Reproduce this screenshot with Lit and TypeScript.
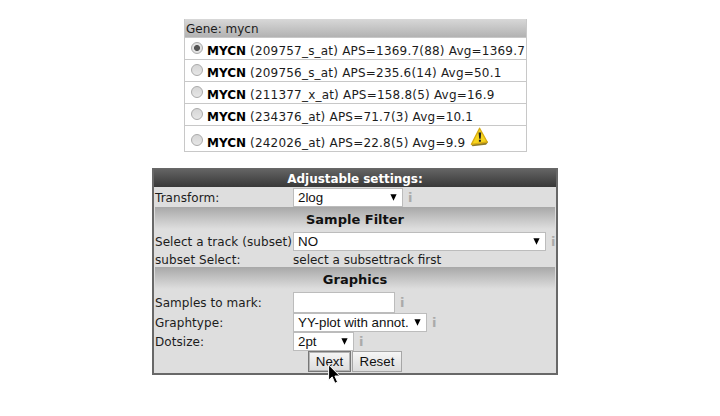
import { LitElement, html, css } from "lit";
import { customElement, property } from "lit/decorators.js";

const probes = [
  { id: "(209757_s_at)", stats: "APS=1369.7(88) Avg=1369.7", on: true },
  { id: "(209756_s_at)", stats: "APS=235.6(14) Avg=50.1" },
  { id: "(211377_x_at)", stats: "APS=158.8(5) Avg=16.9" },
  { id: "(234376_at)", stats: "APS=71.7(3) Avg=10.1" },
  { id: "(242026_at)", stats: "APS=22.8(5) Avg=9.9", warn: true },
];

@customElement("drop-down")
class DropDown extends LitElement {
  @property() value = "";
  static styles = css`
    :host {
      display: flex;
      align-items: center;
      justify-content: space-between;
      box-sizing: border-box;
      height: 19px;
      border: 1px solid #bcbcbc;
      background: #fff;
      padding: 0 5px 0 4px;
      font: 13.33px/17px "Liberation Sans", sans-serif;
      color: #111;
    }
    svg {
      display: block;
    }
  `;
  render() {
    return html`<span>${this.value}</span
      ><svg width="7" height="7" viewBox="0 0 7 7"><path d="M0.4 0.3h6.2L3.5 6.8z" fill="#000" /></svg>`;
  }
}

@customElement("app-root")
class AppRoot extends LitElement {
  static styles = css`
    :host {
      display: block;
      position: relative;
      box-sizing: border-box;
      width: 720px;
      height: 416px;
      padding-top: 19px;
      background: #fff;
      overflow: hidden;
      font: 12px/18px "DejaVu Sans", Verdana, sans-serif;
      color: #1c1c1c;
      white-space: nowrap;
    }
    .genes {
      box-sizing: border-box;
      width: 343px;
      height: 133px;
      margin-left: 184px;
      border: 1px solid #c8c8c8;
      border-top: 0;
    }
    .title {
      height: 18px;
      padding-left: 1px;
      line-height: 20px;
      background: linear-gradient(#d8d8d8, #b2b2b2);
      border-bottom: 1px solid #c8c8c8;
    }
    .probe {
      display: flex;
      height: 21px;
      padding-left: 6px;
      border-bottom: 1px solid #c8c8c8;
      line-height: 26px;
    }
    .probe:last-child {
      height: 25px;
      border: 0;
      line-height: 34px;
    }
    .probe b {
      color: #000;
      margin: 0 4px 0 4px;
    }
    .stats {
      letter-spacing: 0.2px;
    }
    .radio {
      box-sizing: border-box;
      width: 12px;
      height: 12px;
      margin-top: 4px;
      border: 1px solid #aaa;
      border-radius: 50%;
      background: linear-gradient(#d6d6d6, #e6e6e6);
    }
    .probe:last-child .radio {
      margin-top: 8px;
    }
    .radio.on {
      background: radial-gradient(circle, #555 0 2.6px, #e2e2e2 3.4px);
    }
    .warn {
      margin: 1px 0 0 5px;
    }
    .panel {
      box-sizing: border-box;
      width: 406px;
      height: 207px;
      margin: 16px 0 0 152px;
      border: 2px solid #686868;
      border-top-width: 1px;
      background: #dedede;
    }
    .head {
      height: 18px;
      margin-bottom: 1px;
      line-height: 21px;
      text-align: center;
      font-weight: bold;
      letter-spacing: -0.06px;
      color: #fff;
      background: linear-gradient(#646464, #383838);
    }
    .row {
      display: grid;
      grid-template-columns: 138px auto auto;
      justify-content: start;
      align-items: center;
      height: 19px;
      padding-left: 1px;
    }
    .label {
      letter-spacing: 0.06px;
    }
    .subset {
      height: 16px;
    }
    .marks {
      height: 21px;
    }
    .band {
      height: 25px;
      margin: 0 1px;
      background: linear-gradient(#a8a8a8, #dedede 22px);
      text-align: center;
      font-weight: bold;
      font-size: 13px;
      line-height: 25px;
      color: #111;
    }
    .info {
      margin-left: 5px;
      font: bold 13px/17px "DejaVu Sans", sans-serif;
      color: #aaa;
    }
    .field {
      box-sizing: border-box;
      width: 102px;
      height: 21px;
      background: #fff;
      border: 1px solid #bcbcbc;
    }
    .actions {
      display: flex;
      gap: 1px;
      padding-left: 154px;
    }
    .btn {
      box-sizing: border-box;
      height: 21px;
      border: 1px solid #a6a6a6;
      background: linear-gradient(#f6f6f6, #dcdcdc);
      font: 13.33px/19px "Liberation Sans", sans-serif;
      color: #111;
      text-align: center;
    }
    .next {
      width: 43px;
      border-color: #777;
      box-shadow: inset 0 0 0 1px #b4b4b4;
    }
    .reset {
      width: 50px;
    }
    .cursor {
      position: absolute;
      left: 328px;
      top: 364px;
    }
  `;

  private row(label: string, value: string, width: number) {
    return html`<div class="row">
      <span class="label">${label}</span><drop-down .value=${value} style="width:${width}px"></drop-down
      ><span class="info">i</span>
    </div>`;
  }

  render() {
    return html`
      <div class="genes">
        <div class="title">Gene: mycn</div>
        ${probes.map(
          (p) => html`<div class="probe">
            <span class="radio ${p.on ? "on" : ""}"></span><b>MYCN</b><span class="stats">${p.id} ${p.stats}</span>
            ${p.warn
              ? html`<svg class="warn" width="19" height="20" viewBox="0 0 19 20">
                  <path d="M1 17.2 2.5 19.2 16 17.8 18 15.2 17 14z" fill="#8f7b2a" />
                  <path d="M9.6 1.2 17.2 15 1.4 17.4z" fill="#f7d51d" stroke="#d8ac12" stroke-width="1.3" stroke-linejoin="round" />
                  <path d="M8.6 5.5h2.6l-.5 6.2H9.2zM8.9 12.8h2v2h-2z" fill="#222" />
                </svg>`
              : ""}
          </div>`
        )}
      </div>
      <div class="panel">
        <div class="head">Adjustable settings:</div>
        ${this.row("Transform:", "2log", 110)}
        <div class="band">Sample Filter</div>
        ${this.row("Select a track (subset)", "NO", 253)}
        <div class="row subset"><span class="label">subset Select:</span><span>select a subsettrack first</span></div>
        <div class="band">Graphics</div>
        <div class="row marks">
          <span class="label">Samples to mark:</span><span class="field"></span><span class="info">i</span>
        </div>
        ${this.row("Graphtype:", "YY-plot with annot.", 134)} ${this.row("Dotsize:", "2pt", 61)}
        <div class="actions"><span class="btn next">Next</span><span class="btn reset">Reset</span></div>
      </div>
      <svg class="cursor" width="14" height="22" viewBox="0 0 14 22">
        <path d="M.6.8v15.4l3.6-3.3 2.7 6.4 2.7-1.2-2.7-6.1h4.9z" fill="#000" stroke="#fff" stroke-width="1" />
      </svg>
    `;
  }
}
